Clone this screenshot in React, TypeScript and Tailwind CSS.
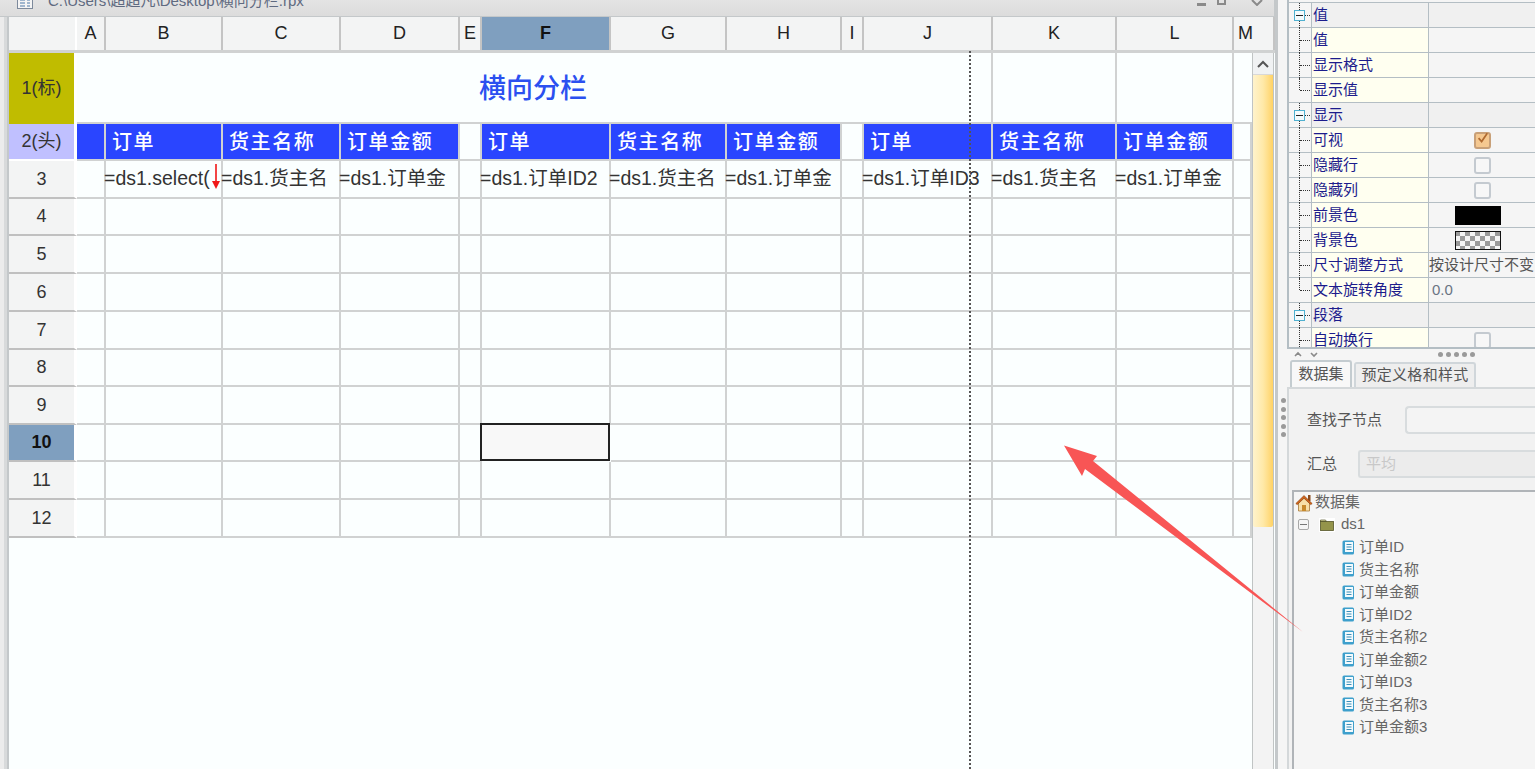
import { Fragment } from 'react'

const columnLabels = ['A', 'B', 'C', 'D', 'E', 'F', 'G', 'H', 'I', 'J', 'K', 'L', 'M']
const bodyColumns = 'grid grid-cols-[68px_29px_117px_118px_119px_22px_129px_116px_115px_22px_129px_124px_117px_18px]'
const headerColumns = 'grid grid-cols-[68px_29px_117px_118px_119px_22px_129px_116px_115px_22px_129px_124px_117px_41px]'

const rowHeights = ['h-[38px]', 'h-[37px]', 'h-[38px]', 'h-[38px]', 'h-[38px]', 'h-[37px]', 'h-[38px]', 'h-[37px]', 'h-[38px]', 'h-[38px]']
const rowNumbers = [3, 4, 5, 6, 7, 8, 9, 10, 11, 12]

const headerCells = ['', '订单', '货主名称', '订单金额', null, '订单', '货主名称', '订单金额', null, '订单', '货主名称', '订单金额', null]
const formulaCells = ['', '=ds1.select(', '=ds1.货主名', '=ds1.订单金', '', '=ds1.订单ID2', '=ds1.货主名', '=ds1.订单金', '', '=ds1.订单ID3', '=ds1.货主名', '=ds1.订单金', '']

const treeFields = ['订单ID', '货主名称', '订单金额', '订单ID2', '货主名称2', '订单金额2', '订单ID3', '货主名称3', '订单金额3']

type PropRow = {
  name: string
  group?: boolean
  last?: boolean
  value?: 'checked' | 'unchecked' | 'black' | 'checker'
  text?: string
  number?: boolean
}

const propRows: PropRow[] = [
  { name: '值', group: true },
  { name: '值' },
  { name: '显示格式' },
  { name: '显示值', last: true },
  { name: '显示', group: true },
  { name: '可视', value: 'checked' },
  { name: '隐藏行', value: 'unchecked' },
  { name: '隐藏列', value: 'unchecked' },
  { name: '前景色', value: 'black' },
  { name: '背景色', value: 'checker' },
  { name: '尺寸调整方式', text: '按设计尺寸不变' },
  { name: '文本旋转角度', text: '0.0', number: true, last: true },
  { name: '段落', group: true },
  { name: '自动换行', value: 'unchecked' },
]

function FieldIcon() {
  return (
    <svg width="13" height="15" viewBox="0 0 13 15" aria-hidden="true" className="shrink-0">
      <rect x="0.5" y="0.5" width="11.5" height="14" rx="1.5" fill="#3d9fcc" />
      <rect x="3" y="2" width="8" height="10" fill="#f2fafd" />
      <path d="M4.5 4.5h5M4.5 7h5M4.5 9.5h5" stroke="#3d8fb8" strokeWidth="1" />
    </svg>
  )
}

function HouseIcon() {
  return (
    <svg width="18" height="18" viewBox="0 0 18 18" aria-hidden="true" className="shrink-0">
      <rect x="13" y="1" width="2.5" height="6" fill="#8a4a1c" />
      <path d="M3.5 9v8h11V9L9 4z" fill="#f8e0a8" stroke="#a87838" strokeWidth="0.8" />
      <path d="M0.8 9.5 9 1.5l8.2 8-1.4 1.2L9 4.3 2.2 10.7z" fill="#d0641c" stroke="#7a3c10" strokeWidth="0.5" />
      <rect x="7" y="11" width="4" height="6" fill="#c88a2c" />
    </svg>
  )
}

function FolderIcon() {
  return (
    <svg width="16" height="14" viewBox="0 0 16 14" aria-hidden="true" className="shrink-0">
      <rect width="16" height="14" fill="#ffffff" />
      <path d="M1.5 3.5V2h5l1 1.5z" fill="#d8d8a0" stroke="#55552a" strokeWidth="0.7" />
      <rect x="1.5" y="3.5" width="13" height="9" fill="#94944a" stroke="#55552a" strokeWidth="0.8" />
    </svg>
  )
}

function ValueCell({ row }: { row: PropRow }) {
  if (row.text) {
    return (
      <span className={row.number ? 'pl-[3px] text-[15px] text-[#6a7484]' : 'text-[15px] whitespace-nowrap text-[#555]'}>
        {row.text}
      </span>
    )
  }
  if (row.value === 'checked') {
    return (
      <div className="ml-[45px] flex size-[17px] items-center justify-center rounded-[3px] border-2 border-[#c8a078] bg-[#f5c890]">
        <svg width="15" height="15" viewBox="0 0 15 15" aria-hidden="true" className="-mt-[3px]">
          <path d="M3 7l3.5 4L13 1.5" fill="none" stroke="#b06a30" strokeWidth="2" />
        </svg>
      </div>
    )
  }
  if (row.value === 'unchecked') {
    return <div className="ml-[45px] size-[17px] rounded-[3px] border-2 border-[#c4cad0] bg-[#f7f7f7]" />
  }
  if (row.value === 'black') {
    return <div className="ml-[26px] h-[19px] w-[46px] bg-black" />
  }
  if (row.value === 'checker') {
    return (
      <svg width="46" height="19" viewBox="0 0 46 19" aria-hidden="true" className="ml-[26px]">
        <defs>
          <pattern id="checker" width="10" height="10" patternUnits="userSpaceOnUse">
            <rect width="10" height="10" fill="#f4f4f4" />
            <rect width="5" height="5" fill="#9a9a9a" />
            <rect x="5" y="5" width="5" height="5" fill="#9a9a9a" />
          </pattern>
        </defs>
        <rect width="46" height="19" fill="url(#checker)" stroke="#111" strokeWidth="2" />
      </svg>
    )
  }
  return null
}

function PropertyRow({ row }: { row: PropRow }) {
  return (
    <div className="flex h-[25px] shrink-0 border-b border-[#b4bec4]">
      <div className="relative flex w-[23px] shrink-0 items-center border-r border-[#b4bec4] bg-[#f5f5f5]">
        <div className={`absolute left-[10px] top-0 border-l border-dotted border-[#333] ${row.last ? 'h-[12px]' : 'h-[25px]'}`} />
        {row.group ? (
          <div className="relative ml-[5px] flex h-[11px] w-[11px] items-center justify-center border border-[#4fb0d0] bg-[#f4fbfd]">
            <div className="h-px w-[7px] bg-[#222]" />
          </div>
        ) : null}
        <div className={`ml-auto mr-[1px] border-t border-dotted border-[#333] ${row.group ? 'w-[5px]' : 'w-[10px]'}`} />
      </div>
      <div className={`flex w-[117px] shrink-0 items-center border-r border-[#b4bec4] pl-[1px] text-[15px] text-[#1c1c8c] ${row.group ? 'bg-[#f0f0f0]' : 'bg-[#fffff0]'}`}>
        {row.name}
      </div>
      <div className={`flex min-w-0 flex-1 items-center overflow-hidden ${row.group ? 'bg-[#f0f0f0]' : 'bg-[#f5f5f5]'}`}>
        <ValueCell row={row} />
      </div>
    </div>
  )
}

function SheetArea() {
  return (
    <div className="relative flex min-h-0 flex-1 flex-col bg-[#fbffff]">
      <div className={`${headerColumns} h-[36px] shrink-0 border-b-[3px] border-[#d0d2d2] bg-[#f3f4f4] text-[18px] text-[#222]`}>
        <div className="border-r-2 border-white" />
        {columnLabels.map((label) => (
          <div
            key={label}
            className={`flex items-center justify-center border-r-2 ${label === 'F' ? 'border-[#c4c4c4] bg-[#7f9fbf] font-bold text-[#111]' : 'border-[#c4c4c4]'} ${label === 'M' ? 'border-r-0 pr-[16px]' : ''}`}
          >
            {label}
          </div>
        ))}
      </div>

      <div className={`${bodyColumns} w-[1243px] shrink-0 [&>div]:border-[#d0d2d2]`}>
        <div className="flex h-[71px] items-center justify-center border-r-[3px] !border-white bg-[#c0bc00] text-[18px] text-[#333]">1(标)</div>
        <div className="col-span-10 flex items-center justify-center border-r-2 border-b-2 pr-[2px] pt-[3px] text-[27px] font-medium text-[#2b50f0]">横向分栏</div>
        <div className="border-r-2 border-b-2" />
        <div className="border-r-2 border-b-2" />
        <div className="border-b-2" />

        <div className="flex h-[37px] items-center justify-center border-r-[3px] border-b-2 !border-white bg-[#c0c0ff] text-[18px] text-[#333]">2(头)</div>
        {headerCells.map((label, index) =>
          label === null ? (
            <div key={index} className="border-r-2 border-b-2" />
          ) : (
            <div key={index} className="flex items-center whitespace-nowrap border-r-2 border-b-2 bg-[#2a45ff] pl-[6px] text-[20px] font-medium tracking-[1.6px] text-white">
              {label}
            </div>
          ),
        )}

        {rowNumbers.map((rowNumber, rowIndex) => (
          <Fragment key={rowNumber}>
            <div
              className={`flex items-center justify-center border-r-[3px] border-b-2 !border-r-white text-[18px] ${rowHeights[rowIndex]} ${rowNumber === 10 ? 'bg-[#7f9fbf] font-bold text-[#111]' : 'bg-[#f3f4f4] text-[#333]'} !border-b-[#c0c0c0]`}
            >
              {rowNumber}
            </div>
            {columnLabels.map((label, colIndex) => {
              if (rowNumber === 3) {
                return (
                  <div key={label} className="flex items-center whitespace-nowrap border-r-2 border-b-2 indent-[-2px] text-[19.5px] text-[#333]">
                    {formulaCells[colIndex]}
                  </div>
                )
              }
              if (rowNumber === 10 && label === 'F') {
                return <div key={label} className="-ml-[2px] -mt-[2px] mb-[1px] mr-[1px] border-2 !border-[#222] bg-[#f8f8f8]" />
              }
              return <div key={label} className="border-r-2 border-b-2" />
            })}
          </Fragment>
        ))}
      </div>

      {/* scrollbar sits over the right edge of the sheet */}
      <div className="absolute bottom-0 left-[1243px] top-[36px] flex w-[22px] flex-col border-x border-[#c0c4c4] bg-[#f3f3f3]">
        <div className="flex h-[22px] shrink-0 items-center justify-center border-b border-[#d8d8d8] bg-[#f0f2f3]">
          <svg width="12" height="8" viewBox="0 0 12 8" aria-hidden="true">
            <path d="M1 7l5-5 5 5" fill="none" stroke="#555" strokeWidth="2" />
          </svg>
        </div>
        <div className="h-[452px] shrink-0 rounded-b-[2px] bg-gradient-to-r from-[#fff3cc] via-[#ffe9a8] to-[#ffd263]" />
      </div>

      {/* page break guide */}
      <div className="absolute bottom-0 left-[960px] top-[34px] border-l-2 border-dotted border-[#555]" />

      {/* expand marker in B3 */}
      <svg width="8" height="26" viewBox="0 0 8 26" aria-hidden="true" className="absolute left-[203px] top-[147px]">
        <path d="M3.2 0h1.6v17H8l-4 8-4-8h3.2z" fill="#f01818" />
      </svg>
    </div>
  )
}

function RightPanel() {
  return (
    <div className="flex w-[257px] shrink-0 flex-col bg-[#f5f5f5]">
      <div className="ml-[9px] flex h-[347px] shrink-0 flex-col overflow-hidden border-l-2 border-[#b4bec4] pt-[2px]">
        <div className="border-t border-[#b4bec4]" />
        {propRows.map((row, index) => (
          <PropertyRow key={index} row={row} />
        ))}
      </div>

      <div className="ml-[9px] flex h-[13px] shrink-0 items-center border-t-2 border-[#b4bec4] pl-[4px]">
        <svg width="32" height="7" viewBox="0 0 32 7" aria-hidden="true">
          <path d="M4 5l3-3 3 3M20 2l3 3 3-3" fill="none" stroke="#8a8a8a" strokeWidth="1.6" />
        </svg>
        <div className="ml-[115px] flex gap-[3px]">
          {[0, 1, 2, 3, 4].map((dot) => (
            <div key={dot} className="size-[5px] rounded-full bg-[#9a9a9a]" />
          ))}
        </div>
      </div>

      <div className="ml-[12px] flex h-[27px] shrink-0 items-end gap-[2px] text-[15px] text-[#555]">
        <div className="flex h-[27px] w-[62px] items-center justify-center rounded-t-[3px] border-2 border-b-0 border-[#c4ccd0] bg-[#f8f8f8]">数据集</div>
        <div className="flex h-[25px] w-[122px] items-center justify-center rounded-t-[3px] border-2 border-b-0 border-[#d0d6da] bg-[#eeeeee] tracking-[0.3px]">预定义格和样式</div>
      </div>

      <div className="flex min-h-0 flex-1">
        <div className="flex w-[9px] shrink-0 flex-col items-center gap-[3.5px] pl-[1px] pt-[11px]">
          {[0, 1, 2, 3, 4].map((dot) => (
            <div key={dot} className="size-[5px] rounded-full bg-[#9a9a9a]" />
          ))}
        </div>
        <div className="flex min-w-0 flex-1 flex-col border-l-2 border-t-2 border-[#d4d8da] bg-[#f2f2f2]">
          <div className="flex items-center pl-[18px] pt-[17px] text-[15px] text-[#555]">
            <span className="w-[98px] shrink-0">查找子节点</span>
            <div className="h-[28px] flex-1 rounded-l-[4px] border-2 border-r-0 border-[#d8dcde] bg-[#f4f4f4]" />
          </div>
          <div className="flex items-center pl-[18px] pt-[16px] text-[15px] text-[#555]">
            <span className="w-[51px] shrink-0">汇总</span>
            <div className="flex h-[28px] flex-1 items-center rounded-l-[3px] border-2 border-r-0 border-[#d8dcde] bg-[#ececec] pl-[6px] text-[#c8c8c8]">平均</div>
          </div>
          <div className="ml-[3px] mt-[12px] flex min-h-0 flex-1 flex-col border-l-2 border-t-2 border-[#b0b4b8] bg-[#f5f5f5] text-[15px] text-[#666]">
            <div className="flex h-[21px] items-center gap-[2px] pl-[1px]">
              <HouseIcon />
              <span>数据集</span>
            </div>
            <div className="flex h-[23px] items-center pl-[4px]">
              <div className="flex size-[11px] items-center justify-center rounded-[2px] border border-[#a8a8a8]">
                <div className="h-px w-[7px] bg-[#777]" />
              </div>
              <div className="ml-[10px]">
                <FolderIcon />
              </div>
              <span className="ml-[6px]">ds1</span>
            </div>
            {treeFields.map((field) => (
              <div key={field} className="flex h-[22.5px] items-center gap-[4px] pl-[48px]">
                <FieldIcon />
                <span>{field}</span>
              </div>
            ))}
          </div>
        </div>
      </div>
    </div>
  )
}

export default function App() {
  return (
    <div className="relative flex h-[769px] w-[1535px] overflow-hidden bg-[#f5f5f5] font-['Liberation_Sans','Noto_Sans_CJK_SC',sans-serif]">
      <div className="flex w-[1278px] shrink-0 flex-col border-r-[4px] border-[#c4c8ca]">
        <div className="flex h-[16px] shrink-0 items-start overflow-hidden bg-gradient-to-b from-[#e4e4e4] to-[#dcdcdc] pl-[17px]">
          <svg width="17" height="14" viewBox="0 0 17 14" aria-hidden="true" className="-mt-[4px] shrink-0">
            <rect x="0.5" y="0.5" width="15" height="12" fill="#f4f4f4" stroke="#7d8a9c" />
            <path d="M3 4h5M3 7h5M3 10h5M10 4h3M10 7h3M10 10h3" stroke="#4d78a8" />
          </svg>
          <span className="-mt-[10px] ml-[14px] whitespace-nowrap text-[15px] text-[#5f6a80]">C:\Users\超超凡\Desktop\横向分栏.rpx</span>
          <div className="ml-auto flex items-start pr-[11px]">
            <div className="mt-[3px] h-[3px] w-[9px] bg-[#8a8a8a]" />
            <div className="ml-[11px] h-[5px] w-[9px] border-2 border-t-0 border-[#8a8a8a]" />
            <svg width="12" height="6" viewBox="0 0 12 6" aria-hidden="true" className="ml-[25px]">
              <path d="M1 0l5 5 5-5" fill="none" stroke="#8a8a8a" strokeWidth="2" />
            </svg>
          </div>
        </div>
        <div className="flex min-h-0 flex-1 border-t border-[#c4c8ca]">
          <div className="w-[9px] shrink-0 border-l-[4px] border-r-2 border-l-[#ececec] border-r-[#c4c8ca] bg-[#d8dadb]" />
          <SheetArea />
        </div>
      </div>

      <RightPanel />

      {/* red annotation arrow drawn on the screenshot */}
      <svg width="1535" height="769" viewBox="0 0 1535 769" aria-hidden="true" className="pointer-events-none absolute left-0 top-0">
        <polygon points="1064,445.5 1097,456 1093,461 1303,632 1085,469 1082,476" fill="#f85555" />
      </svg>
    </div>
  )
}
